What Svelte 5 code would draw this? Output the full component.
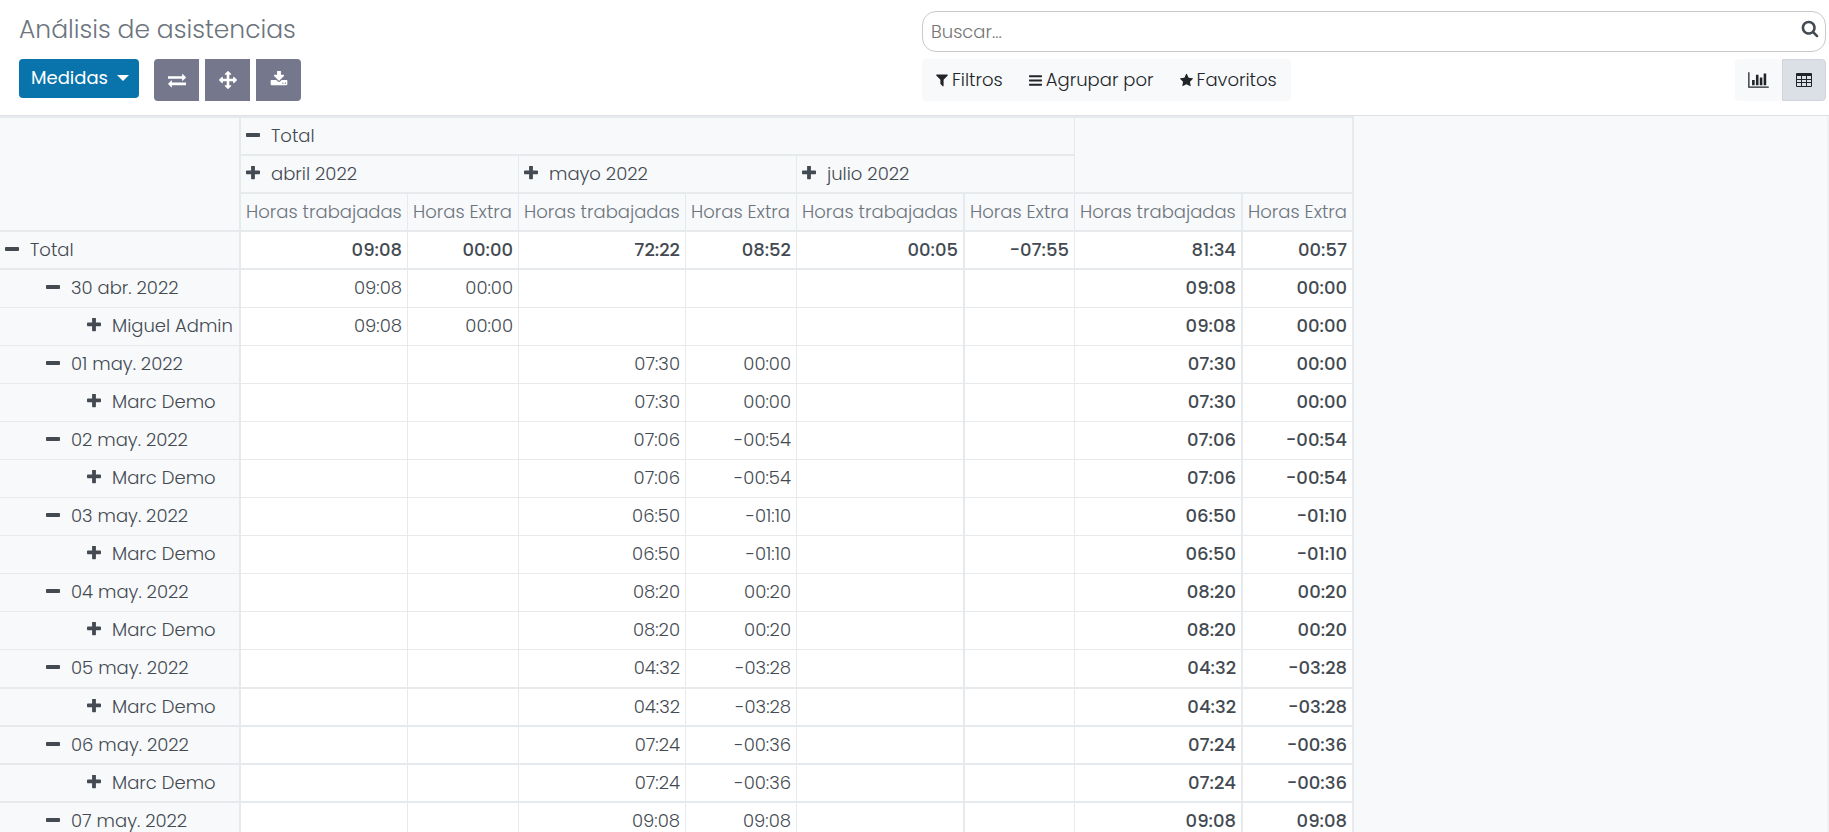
<script lang="ts">
  const icons: Record<string, { box: string; d: string }> = {
    plus: {
      box: '192 192 1408 1408',
      d: 'M1600 736v192q0 40-28 68t-68 28h-416v416q0 40-28 68t-68 28h-192q-40 0-68-28t-28-68v-416h-416q-40 0-68-28t-28-68v-192q0-40 28-68t68-28h416v-416q0-40 28-68t68-28h192q40 0 68 28t28 68v416h416q40 0 68 28t28 68z',
    },
    minus: {
      box: '192 128 1408 1408',
      d: 'M1600 736v192q0 40-28 68t-68 28h-1216q-40 0-68-28t-28-68v-192q0-40 28-68t68-28h1216q40 0 68 28t28 68z',
    },
    exchange: {
      box: '0 0 1792 1792',
      d: 'M1792 1184v192q0 13-9.5 22.5t-22.5 9.5h-1376v192q0 13-9.5 22.5t-22.5 9.5q-12 0-24-10l-319-320q-9-9-9-22 0-14 9-23l320-320q9-9 23-9 13 0 22.5 9.5t9.5 22.5v192h1376q13 0 22.5 9.5t9.5 22.5zm0-544q0 14-9 23l-320 320q-9 9-23 9-13 0-22.5-9.5t-9.5-22.5v-192h-1376q-13 0-22.5-9.5t-9.5-22.5v-192q0-13 9.5-22.5t22.5-9.5h1376v-192q0-14 9-23t23-9q12 0 24 10l319 319q9 9 9 23z',
    },
    arrows: {
      box: '0 0 1792 1792',
      d: 'M1792 896q0 26-19 45l-256 256q-19 19-45 19t-45-19-19-45v-128h-384v384h128q26 0 45 19t19 45-19 45l-256 256q-19 19-45 19t-45-19l-256-256q-19-19-19-45t19-45 45-19h128v-384h-384v128q0 26-19 45t-45 19-45-19l-256-256q-19-19-19-45t19-45l256-256q19-19 45-19t45 19 19 45v128h384v-384h-128q-26 0-45-19t-19-45 19-45l256-256q19-19 45-19t45 19l256 256q19 19 19 45t-19 45-45 19h-128v384h384v-128q0-26 19-45t45-19 45 19l256 256q19 19 19 45z',
    },
    download: {
      box: '0 128 1792 1792',
      d: 'M1344 1344q0-26-19-45t-45-19-45 19-19 45 19 45 45 19 45-19 19-45zm256 0q0-26-19-45t-45-19-45 19-19 45 19 45 45 19 45-19 19-45zm128-224v320q0 40-28 68t-68 28h-1472q-40 0-68-28t-28-68v-320q0-40 28-68t68-28h465l135 136q58 56 136 56t136-56l136-136h464q40 0 68 28t28 68zm-325-569q17 41-14 70l-448 448q-18 19-45 19t-45-19l-448-448q-31-29-14-70 17-39 59-39h256v-448q0-26 19-45t45-19h256q26 0 45 19t19 45v448h256q42 0 59 39z',
    },
    search: {
      box: '0 64 1792 1792',
      d: 'M1216 832q0-185-131.5-316.5t-316.5-131.5-316.5 131.5-131.5 316.5 131.5 316.5 316.5 131.5 316.5-131.5 131.5-316.5zm512 832q0 52-38 90t-90 38q-54 0-90-38l-343-342q-179 124-399 124-143 0-273.5-55.5t-225-150-150-225-55.5-273.5 55.5-273.5 150-225 225-150 273.5-55.5 273.5 55.5 225 150 150 225 55.5 273.5q0 220-124 399l343 343q37 37 37 90z',
    },
    filter: {
      box: '192 64 1408 1792',
      d: 'M1595 295q17 41-14 70l-493 493v742q0 42-39 59-13 5-25 5-27 0-45-19l-256-256q-19-19-19-45v-486l-493-493q-31-29-14-70 17-39 59-39h1280q42 0 59 39z',
    },
    bars: {
      box: '128 0 1536 1792',
      d: 'M1664 1344v128q0 26-19 45t-45 19h-1408q-26 0-45-19t-19-45v-128q0-26 19-45t45-19h1408q26 0 45 19t19 45zm0-512v128q0 26-19 45t-45 19h-1408q-26 0-45-19t-19-45v-128q0-26 19-45t45-19h1408q26 0 45 19t19 45zm0-512v128q0 26-19 45t-45 19h-1408q-26 0-45-19t-19-45v-128q0-26 19-45t45-19h1408q26 0 45 19t19 45z',
    },
    star: {
      box: '64 0 1664 1792',
      d: 'M1728 647q0 22-26 48l-363 354 86 500q1 7 1 20 0 21-10.5 35.5t-30.5 14.5q-19 0-40-12l-449-236-449 236q-22 12-40 12-21 0-31.5-14.5t-10.5-35.5q0-6 2-20l86-500-364-354q-25-27-25-48 0-37 56-46l502-73 225-455q19-41 49-41t49 41l225 455 502 73q56 9 56 46z',
    },
    chart: {
      box: '0 0 2048 1792',
      d: 'M640 896v512h-256v-512h256zm384-512v1024h-256v-1024h256zm1024 1152v128h-2048v-1536h128v1408h1920zm-640-896v768h-256v-768h256zm384-384v1152h-256v-1152h256z',
    },
    grid: {
      box: '0 0 18 18',
      d: 'M2 2h14q1 0 1 1v12q0 1-1 1H2q-1 0-1-1V3q0-1 1-1zM2 5v3h4V5zM7 5v3h4V5zM12 5v3h4V5zM2 9v2h4V9zM7 9v2h4V9zM12 9v2h4V9zM2 12v3h4v-3zM7 12v3h4v-3zM12 12v3h4v-3z',
    },
  }

  const months = ['abril 2022', 'mayo 2022', 'julio 2022']
  const widths = [241, 167, 111, 167, 111, 168, 110, 168, 111]

  type Row = { label: string; level: number; cells: string[] }

  // Each day has one employee line that repeats the figures of the day.
  function day(date: string, person: string, column: number, worked: string, extra: string): Row[] {
    const cells = ['', '', '', '', '', '', worked, extra]
    cells[column] = worked
    cells[column + 1] = extra
    return [
      { label: date, level: 1, cells },
      { label: person, level: 2, cells },
    ]
  }

  const rows: Row[] = [
    { label: 'Total', level: 0, cells: ['09:08', '00:00', '72:22', '08:52', '00:05', '-07:55', '81:34', '00:57'] },
    ...day('30 abr. 2022', 'Miguel Admin', 0, '09:08', '00:00'),
    ...day('01 may. 2022', 'Marc Demo', 2, '07:30', '00:00'),
    ...day('02 may. 2022', 'Marc Demo', 2, '07:06', '-00:54'),
    ...day('03 may. 2022', 'Marc Demo', 2, '06:50', '-01:10'),
    ...day('04 may. 2022', 'Marc Demo', 2, '08:20', '00:20'),
    ...day('05 may. 2022', 'Marc Demo', 2, '04:32', '-03:28'),
    ...day('06 may. 2022', 'Marc Demo', 2, '07:24', '-00:36'),
    ...day('07 may. 2022', 'Marc Demo', 2, '09:08', '09:08'),
  ]
</script>

{#snippet icon(name: string)}
  <svg class="icon icon-{name}" viewBox={icons[name].box} aria-hidden="true">
    <path d={icons[name].d} fill="currentColor" fill-rule="evenodd" />
  </svg>
{/snippet}

<div class="page">
  <header>
    <div class="left">
      <h1>Análisis de asistencias</h1>
      <div class="actions">
        <button class="measures">Medidas <span class="caret"></span></button>
        <div class="tools">
          <button aria-label="Intercambiar ejes">{@render icon('exchange')}</button>
          <button aria-label="Expandir todo">{@render icon('arrows')}</button>
          <button aria-label="Descargar">{@render icon('download')}</button>
        </div>
      </div>
    </div>
    <div class="right">
      <div class="search">
        <input type="text" placeholder="Buscar..." aria-label="Buscar" />
        <button aria-label="Buscar">{@render icon('search')}</button>
      </div>
      <div class="options">
        <div class="filters">
          <button>{@render icon('filter')}Filtros</button>
          <button>{@render icon('bars')}Agrupar por</button>
          <button>{@render icon('star')}Favoritos</button>
        </div>
        <div class="views">
          <button aria-label="Gráfico">{@render icon('chart')}</button>
          <button class="active" aria-label="Pivote">{@render icon('grid')}</button>
        </div>
      </div>
    </div>
  </header>

  <main>
    <table>
      <colgroup>
        {#each widths as w}<col style="width: {w}px" />{/each}
      </colgroup>
      <thead>
        <tr>
          <td class="corner" rowspan="3"></td>
          <th colspan="6"><button class="toggle">{@render icon('minus')}Total</button></th>
          <td class="last" colspan="2" rowspan="2"></td>
        </tr>
        <tr>
          {#each months as month}
            <th colspan="2"><button class="toggle">{@render icon('plus')}{month}</button></th>
          {/each}
        </tr>
        <tr class="names">
          {#each [0, 1, 2, 3] as group}
            <th class:thick={group > 1}>Horas trabajadas</th>
            <th class:thick={group === 3}>Horas Extra</th>
          {/each}
        </tr>
      </thead>
      <tbody>
        {#each rows as row, i}
          <tr class:total={i === 0} class:heavy={i > 10} class:tall={i === 11}>
            <th scope="row">
              <button class="toggle level{row.level}">
                {@render icon(row.level === 2 ? 'plus' : 'minus')}{row.label}
              </button>
            </th>
            {#each row.cells as cell, c}
              <td class:thick={c === 4 || c > 5} class:bold={i === 0 || c > 5}>{cell}</td>
            {/each}
          </tr>
        {/each}
      </tbody>
    </table>
  </main>
</div>

<style>
  :global(body) {
    background: #fff;
  }
  .page,
  .page :is(button, input) {
    font-family: Poppins, Inter, 'Noto Sans', sans-serif;
    font-size: 18px;
    line-height: 26px;
  }
  .page {
    height: 100vh;
    display: flex;
    flex-direction: column;
    overflow: hidden;
    color: #434a51;
  }
  .page * {
    box-sizing: border-box;
  }
  button {
    display: flex;
    align-items: center;
    margin: 0;
    padding: 0;
    border: 0;
    background: none;
    color: inherit;
    font-weight: 300;
    white-space: nowrap;
    cursor: pointer;
  }
  .icon {
    flex: none;
    display: block;
    width: 18px;
    height: 18px;
  }

  header {
    flex: none;
    display: grid;
    grid-template-columns: 1fr 1fr;
    padding: 11px 3px 14px 18px;
    border-bottom: 1px solid #dee2e6;
  }
  .left {
    padding-left: 1px;
  }
  h1 {
    margin: 0;
    height: 48px;
    font-size: 25px;
    line-height: 38px;
    font-weight: 300;
    color: #6c757d;
  }
  .actions {
    display: flex;
    align-items: flex-start;
    gap: 15px;
  }
  .measures {
    gap: 9px;
    height: 39px;
    padding: 0 10px 2px 12px;
    border-radius: 4px;
    background: #0874ab;
    color: #fff;
    font-weight: 400;
  }
  .caret {
    border: 6px solid transparent;
    border-top-color: #fff;
    border-bottom: 0;
  }
  .tools {
    display: flex;
    gap: 6px;
  }
  .tools button {
    width: 45px;
    height: 42px;
    justify-content: center;
    background: #75788d;
    color: #fff;
  }
  .tools button:first-child {
    border-radius: 4px 0 0 4px;
  }
  .tools button:last-child {
    border-radius: 0 4px 4px 0;
  }

  .right {
    display: flex;
    flex-direction: column;
    gap: 7px;
  }
  .search {
    display: flex;
    align-items: center;
    height: 41px;
    padding: 0 6px 0 8px;
    border: 1px solid #c8c9cc;
    border-radius: 14px;
  }
  .search input {
    flex: 1;
    min-width: 0;
    padding: 0;
    border: 0;
    outline: 0;
    background: none;
    font-weight: 300;
  }
  .search input::placeholder {
    color: #757575;
  }
  .search button {
    padding-bottom: 5px;
  }
  .options {
    display: flex;
    justify-content: space-between;
    color: #212529;
  }
  .filters {
    display: flex;
    gap: 26px;
    height: 42px;
    padding: 0 14px;
    border-radius: 4px;
    background: #f8f9fa;
  }
  .filters button {
    gap: 4px;
  }
  .filters .icon {
    width: 13px;
    height: 15px;
  }
  .filters .icon-filter {
    width: 12px;
  }
  .views {
    display: flex;
  }
  .views button {
    justify-content: center;
    width: 47px;
    height: 42px;
    border-radius: 4px 0 0 4px;
    background: #f8f9fa;
  }
  .views .active {
    width: 44px;
    border: 1px solid #d0d4da;
    border-radius: 0 4px 4px 0;
    background: #dae0e5;
  }
  .views .icon-chart {
    width: 21px;
  }

  main {
    flex: 1;
    min-height: 0;
    overflow: hidden;
    border-right: 2px solid #f0f1f2;
    background: #f8f9fb;
  }
  table {
    table-layout: fixed;
    width: 0;
    border-spacing: 0;
    border-top: 2px solid #e7eaed;
  }
  th,
  td {
    height: 38px;
    padding: 0 5px 1px;
    border: solid #e7eaed;
    border-width: 0 1px 1px 0;
    font-weight: 300;
    text-align: left;
    white-space: nowrap;
  }
  thead :is(th, td),
  .total :is(th, td),
  .heavy :is(th, td) {
    padding-bottom: 0;
    border-bottom-width: 2px;
  }
  .tall :is(th, td) {
    height: 39px;
    padding-bottom: 1px;
  }
  .thick,
  .last,
  .corner,
  tbody th {
    border-right-width: 2px;
  }
  .names th {
    color: #6c757d;
  }
  tbody td {
    background: #fff;
    text-align: right;
  }
  tbody .bold {
    font-weight: 500;
  }
  .toggle {
    gap: 11px;
  }
  .toggle .icon {
    width: 14px;
    height: 14px;
    margin-bottom: 2px;
  }
  .level1 {
    padding-left: 41px;
  }
  .level2 {
    padding-left: 82px;
  }
</style>
